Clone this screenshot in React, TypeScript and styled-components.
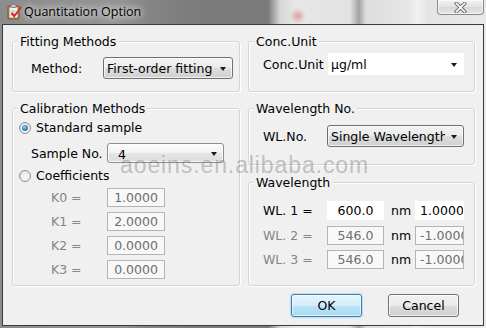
import React from "react";
import styled, { createGlobalStyle, css } from "styled-components";

const GlobalStyle = createGlobalStyle`
  html, body {
    margin: 0;
    padding: 0;
  }
  body {
    width: 486px;
    height: 328px;
    overflow: hidden;
    font-family: "DejaVu Sans", Verdana, sans-serif;
    font-size: 12.5px;
    color: #141414;
  }
`;

const AppIcon = () => (
  <svg width="17" height="17" viewBox="0 0 17 17">
    <rect x="2" y="3" width="11" height="13" rx="1" fill="#b88a4c" stroke="#6b4a22" strokeWidth="0.8" />
    <rect x="3.5" y="4.5" width="8" height="10" fill="#f4f2ee" />
    <rect x="5" y="1.5" width="5" height="3" rx="0.8" fill="#c9c9c9" stroke="#6d6d6d" strokeWidth="0.7" />
    <path d="M4.5 8h5M4.5 10h4M4.5 12h3" stroke="#9aa7c0" strokeWidth="0.8" />
    <path d="M6 10.5l2.2 2.6L15 4.5" fill="none" stroke="#d42a2a" strokeWidth="2" strokeLinecap="round" />
  </svg>
);

const CloseGlyph = () => (
  <svg width="13" height="11" viewBox="0 0 13 11">
    <path d="M2.5 1.5l8 8M10.5 1.5l-8 8" stroke="#6a6a6a" strokeWidth="3.6" strokeLinecap="square" />
    <path d="M2.5 1.5l8 8M10.5 1.5l-8 8" stroke="#ffffff" strokeWidth="1.7" strokeLinecap="square" />
  </svg>
);

const Window = styled.div`
  position: relative;
  width: 486px;
  height: 328px;
  display: flex;
  flex-direction: column;
  background:
    radial-gradient(circle at 298px 16px, rgba(214, 70, 86, 0.45) 0, rgba(214, 70, 86, 0) 8px),
    linear-gradient(
      to right,
      #8c8c8c 0,
      #939393 120px,
      #858585 148px,
      #7b7b7b 200px,
      #7a7a7a 268px,
      #d6d6d6 280px,
      #e7e7e7 296px,
      #e2e2e2 350px,
      #a2a2a2 359px,
      #dedede 366px,
      #e6e6e6 408px,
      #f1f1f1 417px,
      #e4e4e4 428px,
      #e9e9e9 486px
    );
`;

const TitleBar = styled.div`
  height: 24px;
  display: flex;
  align-items: flex-start;
  padding-left: 6px;
`;

const IconSlot = styled.div`
  margin-top: 3px;
  width: 18px;
  height: 17px;
`;

const TitleText = styled.span`
  margin-top: 4px;
  font-family: "Open Sans", "Noto Sans", sans-serif;
  font-size: 12.5px;
  line-height: 16px;
  color: #000;
  text-shadow: 0 0 6px #ffffff, 0 0 10px rgba(255, 255, 255, 0.8);
`;

const CloseButton = styled.div`
  margin-left: auto;
  margin-right: 2px;
  box-sizing: border-box;
  width: 47px;
  height: 15px;
  display: flex;
  align-items: center;
  justify-content: center;
  border: 1px solid #8a8a8a;
  border-top: none;
  border-radius: 0 0 4px 4px;
  background: linear-gradient(#f3f3f3, #e2e2e2 50%, #d8d8d8 51%, #e6e6e6);
  box-shadow: inset 0 0 0 1px rgba(255, 255, 255, 0.6);
`;

const Client = styled.div`
  flex: 1;
  margin: 0 2px 2px 2px;
  border: 1px solid #3b3b3b;
  background: #f0f0f0;
  padding: 16px 8px 0 9px;
  display: flex;
  flex-direction: column;
`;

const GroupRow = styled.div<{ $top?: number }>`
  display: grid;
  grid-template-columns: 228px 227px;
  column-gap: 8px;
  margin-top: ${(p) => p.$top ?? 0}px;
  align-items: start;
`;

const Column = styled.div`
  display: flex;
  flex-direction: column;
  gap: 17px;
`;

const GroupBox = styled.div<{ $height: number }>`
  box-sizing: border-box;
  height: ${(p) => p.$height}px;
  border: 1px solid #d3d6d8;
  border-radius: 3px;
  box-shadow: inset 1px 1px 0 #ffffff, 1px 1px 0 #ffffff;
  display: flex;
  flex-direction: column;
`;

const GroupTitle = styled.span`
  align-self: flex-start;
  margin: -8px 0 0 5px;
  padding: 0 2px;
  line-height: 15px;
  background: #f0f0f0;
  color: #000;
`;

const FieldRow = styled.div<{ $top: number; $indent: number }>`
  display: flex;
  align-items: center;
  margin-top: ${(p) => p.$top}px;
  padding-left: ${(p) => p.$indent}px;
`;

const Label = styled.span<{ $width?: number; $muted?: boolean }>`
  flex: none;
  width: ${(p) => (p.$width ? `${p.$width}px` : "auto")};
  line-height: 15px;
  white-space: nowrap;
  color: ${(p) => (p.$muted ? "#858585" : "#000")};
`;

type ComboVariant = "button" | "soft" | "flat";

const ComboBox = styled.div<{ $width: number; $height: number; $variant: ComboVariant }>`
  flex: none;
  box-sizing: border-box;
  width: ${(p) => p.$width}px;
  height: ${(p) => p.$height}px;
  display: flex;
  align-items: center;
  border-radius: 3px;
  overflow: hidden;
  ${(p) =>
    p.$variant === "button" &&
    css`
      border: 1px solid #707070;
      background: linear-gradient(#f3f3f3 0%, #ebebeb 50%, #dddddd 51%, #d0d0d0 100%);
      box-shadow: inset 0 0 0 1px rgba(255, 255, 255, 0.7);
    `}
  ${(p) =>
    p.$variant === "soft" &&
    css`
      border: 1px solid #8e8e8e;
      background: linear-gradient(#fbfbfb 0%, #f3f3f3 50%, #e6e6e6 51%, #dcdcdc 100%);
      box-shadow: inset 0 0 0 1px rgba(255, 255, 255, 0.8);
    `}
  ${(p) =>
    p.$variant === "flat" &&
    css`
      border: 1px solid #ffffff;
      border-radius: 0;
      background: #ffffff;
    `}
`;

const ComboValue = styled.span<{ $pad: number; $drop?: number }>`
  flex: 1;
  min-width: 0;
  overflow: hidden;
  white-space: nowrap;
  padding-left: ${(p) => p.$pad}px;
  padding-top: ${(p) => p.$drop ?? 0}px;
  line-height: 15px;
  color: #000;
`;

const Arrow = styled.span`
  flex: none;
  width: 0;
  height: 0;
  margin: 1px 6px 0 6px;
  border-left: 3.5px solid transparent;
  border-right: 3.5px solid transparent;
  border-top: 4px solid #1a1a1a;
`;

const Combo = ({
  value,
  width,
  height,
  variant,
  pad,
  drop,
}: {
  value: string;
  width: number;
  height: number;
  variant: ComboVariant;
  pad: number;
  drop?: number;
}) => (
  <ComboBox $width={width} $height={height} $variant={variant}>
    <ComboValue $pad={pad} $drop={drop}>
      {value}
    </ComboValue>
    <Arrow />
  </ComboBox>
);

type BoxVariant = "active" | "disabled";

const TextBox = styled.div<{ $width: number; $variant: BoxVariant; $align: "center" | "left" }>`
  flex: none;
  box-sizing: border-box;
  width: ${(p) => p.$width}px;
  height: 19px;
  overflow: hidden;
  white-space: nowrap;
  line-height: 17px;
  text-align: ${(p) => p.$align};
  padding-left: ${(p) => (p.$align === "left" ? "4px" : "0")};
  ${(p) =>
    p.$variant === "active"
      ? css`
          border: 1px solid #ffffff;
          background: #ffffff;
          color: #000;
        `
      : css`
          border: 1px solid #b4b4b4;
          background: #f8f8f8;
          color: #6e6e6e;
        `}
`;

const Radio = styled.span<{ $checked?: boolean }>`
  position: relative;
  flex: none;
  box-sizing: border-box;
  width: 12px;
  height: 12px;
  margin-right: 5px;
  border-radius: 50%;
  border: 1px solid #8f8f8f;
  background: radial-gradient(circle at 60% 65%, #fbfbfb 0, #e4e4e4 70%, #d4d4d4 100%);
  ${(p) =>
    p.$checked &&
    css`
      &::after {
        content: "";
        position: absolute;
        left: 2px;
        top: 2px;
        width: 6px;
        height: 6px;
        border-radius: 50%;
        background: radial-gradient(circle at 40% 35%, #8fd0f5 0, #2a86c8 55%, #0d4f8a 100%);
      }
    `}
`;

const Unit = styled.span`
  margin: 0 4px 0 7px;
  line-height: 15px;
  color: #000;
`;

const ButtonRow = styled.div`
  display: flex;
  justify-content: flex-end;
  gap: 26px;
  margin-top: 8px;
  padding-right: 16px;
`;

const Button = styled.div<{ $default?: boolean }>`
  box-sizing: border-box;
  width: 71px;
  height: 23px;
  display: flex;
  align-items: center;
  justify-content: center;
  border-radius: 3px;
  font-size: 12.5px;
  color: #000;
  ${(p) =>
    p.$default
      ? css`
          border: 1px solid #3c7fb1;
          background: linear-gradient(#e5f4fc 0%, #d4edfa 50%, #bde3f6 51%, #a9daf3 100%);
          box-shadow: inset 0 0 0 1px rgba(255, 255, 255, 0.55), 0 0 1px 1px rgba(100, 180, 230, 0.35);
        `
      : css`
          border: 1px solid #707070;
          background: linear-gradient(#f2f2f2 0%, #ebebeb 50%, #dddddd 51%, #cfcfcf 100%);
          box-shadow: inset 0 0 0 1px rgba(255, 255, 255, 0.7);
        `}
`;

const Watermark = styled.span`
  position: absolute;
  left: 120px;
  top: 152px;
  font-family: "Liberation Sans", Arial, sans-serif;
  font-size: 23px;
  line-height: 26px;
  letter-spacing: 0.9px;
  color: rgba(120, 120, 120, 0.42);
  pointer-events: none;
  white-space: nowrap;
`;

const coefficients = [
  { label: "K0 =", value: "1.0000" },
  { label: "K1 =", value: "2.0000" },
  { label: "K2 =", value: "0.0000" },
  { label: "K3 =", value: "0.0000" },
];

const wavelengths = [
  { label: "WL. 1 =", nm: "600.0", factor: "1.0000", active: true, top: 11 },
  { label: "WL. 2 =", nm: "546.0", factor: "-1.0000", active: false, top: 6 },
  { label: "WL. 3 =", nm: "546.0", factor: "-1.0000", active: false, top: 5 },
];

export default function App() {
  return (
    <>
      <GlobalStyle />
      <Window>
        <TitleBar>
          <IconSlot>
            <AppIcon />
          </IconSlot>
          <TitleText>Quantitation Option</TitleText>
          <CloseButton>
            <CloseGlyph />
          </CloseButton>
        </TitleBar>

        <Client>
          <GroupRow>
            <GroupBox $height={51}>
              <GroupTitle>Fitting Methods</GroupTitle>
              <FieldRow $top={8} $indent={18}>
                <Label $width={72}>Method:</Label>
                <Combo value="First-order fitting" width={130} height={22} variant="button" pad={3} />
              </FieldRow>
            </GroupBox>
            <GroupBox $height={51}>
              <GroupTitle>Conc.Unit</GroupTitle>
              <FieldRow $top={4} $indent={14}>
                <Label $width={65}>Conc.Unit</Label>
                <Combo value="μg/ml" width={136} height={22} variant="flat" pad={2} />
              </FieldRow>
            </GroupBox>
          </GroupRow>

          <GroupRow $top={16}>
            <GroupBox $height={178}>
              <GroupTitle>Calibration Methods</GroupTitle>
              <FieldRow $top={4} $indent={6}>
                <Radio $checked />
                <Label>Standard sample</Label>
              </FieldRow>
              <FieldRow $top={8} $indent={18}>
                <Label $width={76}>Sample No.</Label>
                <Combo value="4" width={117} height={20} variant="soft" pad={10} drop={3} />
              </FieldRow>
              <FieldRow $top={5} $indent={6}>
                <Radio />
                <Label>Coefficients</Label>
              </FieldRow>
              {coefficients.map((k) => (
                <FieldRow key={k.label} $top={5} $indent={38}>
                  <Label $width={56} $muted>
                    {k.label}
                  </Label>
                  <TextBox $width={58} $variant="disabled" $align="center">
                    {k.value}
                  </TextBox>
                </FieldRow>
              ))}
            </GroupBox>

            <Column>
              <GroupBox $height={57}>
                <GroupTitle>Wavelength No.</GroupTitle>
                <FieldRow $top={9} $indent={14}>
                  <Label $width={64}>WL.No.</Label>
                  <Combo value="Single Wavelength" width={137} height={22} variant="button" pad={3} />
                </FieldRow>
              </GroupBox>
              <GroupBox $height={104}>
                <GroupTitle>Wavelength</GroupTitle>
                {wavelengths.map((w) => (
                  <FieldRow key={w.label} $top={w.top} $indent={14}>
                    <Label $width={64} $muted={!w.active}>
                      {w.label}
                    </Label>
                    <TextBox $width={57} $variant={w.active ? "active" : "disabled"} $align="center">
                      {w.nm}
                    </TextBox>
                    <Unit>nm</Unit>
                    <TextBox $width={49} $variant={w.active ? "active" : "disabled"} $align="left">
                      {w.factor}
                    </TextBox>
                  </FieldRow>
                ))}
              </GroupBox>
            </Column>
          </GroupRow>

          <ButtonRow>
            <Button $default>OK</Button>
            <Button>Cancel</Button>
          </ButtonRow>
        </Client>

        <Watermark>aoeins.en.alibaba.com</Watermark>
      </Window>
    </>
  );
}
